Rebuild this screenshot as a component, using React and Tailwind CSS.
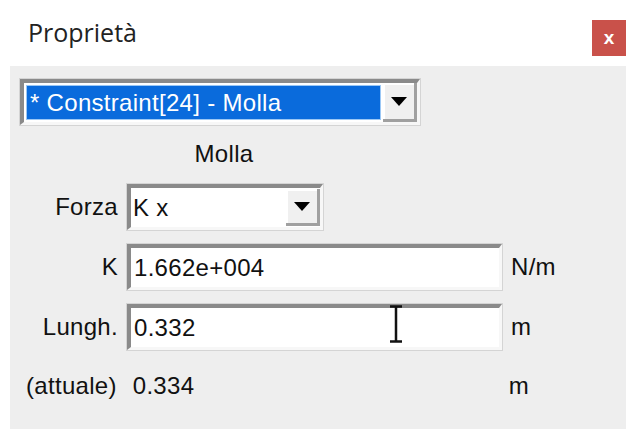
const sunken =
  "border-t-[4px] border-l-[4px] border-b-[3px] border-r-[3px] border-t-[#8a8a8a] border-l-[#8a8a8a] border-b-[#f7f7f7] border-r-[#f7f7f7] outline outline-1 outline-[#d4d4d4]";

const DropButton = () => (
  <div className="flex h-full w-[34px] items-center justify-center border-b-[3px] border-r-[3px] border-b-[#a0a0a0] border-r-[#a0a0a0] bg-[#f0f0f0] shadow-[inset_2px_2px_0_#ffffff]">
    <svg width="16" height="9" viewBox="0 0 16 9">
      <path d="M0 0h16L8 9z" fill="#000" />
    </svg>
  </div>
);

const Field = ({ value }) => (
  <div className={`flex h-[46px] w-[375px] items-center bg-white pl-[3px] ${sunken}`}>
    <span>{value}</span>
  </div>
);

const IBeam = () => (
  <svg
    className="absolute left-[379px] top-[239px]"
    width="14"
    height="38"
    viewBox="0 0 14 38"
  >
    <path d="M1 1.5h12M7 1.5v35M1 36.5h12" stroke="#111" strokeWidth="2.5" fill="none" />
  </svg>
);

export default function App() {
  return (
    <div
      className="flex h-[429px] w-[626px] flex-col overflow-hidden bg-white text-[24px] text-[#111]"
      style={{ fontFamily: '"Liberation Sans", Arial, sans-serif' }}
    >
      <div className="flex h-[66px] shrink-0 items-start justify-between">
        <div
          className="pl-[28px] pt-[14px] text-[25px] text-[#222]"
          style={{ fontFamily: '"Open Sans", "Noto Sans", sans-serif' }}
        >
          Proprietà
        </div>
        <div className="mt-[20px] flex h-[36px] w-[34px] items-center justify-center bg-[#c9514a] text-[19px] font-bold text-white">
          x
        </div>
      </div>

      <div className="relative ml-[10px] flex flex-1 flex-col bg-[#eeeeee] tracking-[0.3px]">
        {/* object selector */}
        <div className={`ml-[10px] mt-[13px] flex h-[46px] w-[400px] items-stretch bg-white ${sunken}`}>
          <div className="m-[2px] flex flex-1 items-center border border-[#9cc8f5] bg-[#0a6bdc] pl-[3px] text-white">
            * Constraint[24] - Molla
          </div>
          <DropButton />
        </div>

        <div className="mt-[13px] w-[428px] text-center leading-[32px]">Molla</div>

        <div className="mt-[14px] grid grid-cols-[108px_375px_auto] items-center justify-start gap-x-[9px] gap-y-[14px]">
          <span className="text-right">Forza</span>
          <div className={`flex h-[46px] w-[196px] items-stretch bg-white ${sunken}`}>
            <div className="flex flex-1 items-center pl-[2px]">K x</div>
            <div className="py-[1px]">
              <DropButton />
            </div>
          </div>
          <span />

          <span className="text-right">K</span>
          <Field value="1.662e+004" />
          <span>N/m</span>

          <span className="text-right">Lungh.</span>
          <Field value="0.332" />
          <span>m</span>
        </div>

        <div className="mt-[18px] flex items-center">
          <span className="ml-[16px]">(attuale)</span>
          <span className="ml-[16px] w-[376px]">0.334</span>
          <span>m</span>
        </div>

        <IBeam />
      </div>
    </div>
  );
}
